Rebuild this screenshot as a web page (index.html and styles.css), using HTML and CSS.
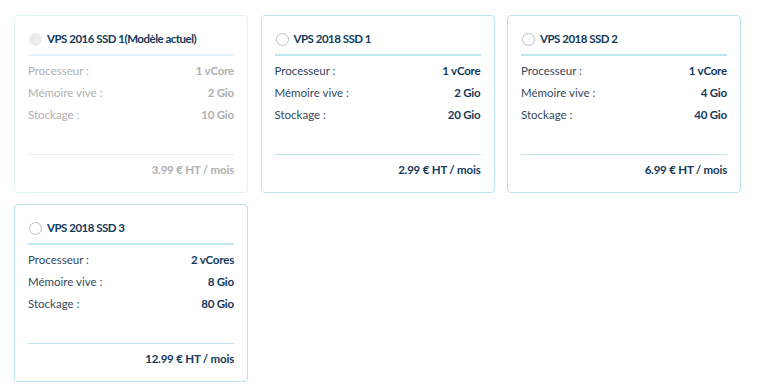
FILE: index.html
```html
<!DOCTYPE html>
<html lang="fr">
<head>
    <meta charset="UTF-8">
    <title>Changer de modèle VPS</title>
    <link rel="stylesheet" href="styles.css">
</head>
<body>

    <!-- Liste des offres VPS -->
    <div class="offers">

        <div class="offer disabled">
            <div class="offer-head">
                <span class="radio"></span>
                <span class="offer-name">VPS 2016 SSD 1(Modèle actuel)</span>
            </div>
            <div class="offer-specs">
                <div class="spec"><span>Processeur :</span><b>1 vCore</b></div>
                <div class="spec"><span>Mémoire vive :</span><b>2 Gio</b></div>
                <div class="spec"><span>Stockage :</span><b>10 Gio</b></div>
            </div>
            <div class="offer-price">3.99 € HT / mois</div>
        </div>

        <div class="offer">
            <div class="offer-head">
                <span class="radio"></span>
                <span class="offer-name">VPS 2018 SSD 1</span>
            </div>
            <div class="offer-specs">
                <div class="spec"><span>Processeur :</span><b>1 vCore</b></div>
                <div class="spec"><span>Mémoire vive :</span><b>2 Gio</b></div>
                <div class="spec"><span>Stockage :</span><b>20 Gio</b></div>
            </div>
            <div class="offer-price">2.99 € HT / mois</div>
        </div>

        <div class="offer">
            <div class="offer-head">
                <span class="radio"></span>
                <span class="offer-name">VPS 2018 SSD 2</span>
            </div>
            <div class="offer-specs">
                <div class="spec"><span>Processeur :</span><b>1 vCore</b></div>
                <div class="spec"><span>Mémoire vive :</span><b>4 Gio</b></div>
                <div class="spec"><span>Stockage :</span><b>40 Gio</b></div>
            </div>
            <div class="offer-price">6.99 € HT / mois</div>
        </div>

        <div class="offer">
            <div class="offer-head">
                <span class="radio"></span>
                <span class="offer-name">VPS 2018 SSD 3</span>
            </div>
            <div class="offer-specs">
                <div class="spec"><span>Processeur :</span><b>2 vCores</b></div>
                <div class="spec"><span>Mémoire vive :</span><b>8 Gio</b></div>
                <div class="spec"><span>Stockage :</span><b>80 Gio</b></div>
            </div>
            <div class="offer-price">12.99 € HT / mois</div>
        </div>

    </div>

</body>
</html>
```

FILE: styles.css
```css
body {
    font-family: Lato, "Open Sans", sans-serif;
    font-size: 11.5px;
    color: #34495b;
    background-color: #fff;
    margin: 0;
    padding: 15px 14px;
}
.offers {
    display: grid;
    grid-template-columns: repeat(3, 234px);
    column-gap: 12.5px;
    row-gap: 11px;
}
.offer {
    border: 1px solid #b7e4ee;
    border-radius: 4px;
    padding: 0 13px 11px;
}
.offer-head {
    display: flex;
    align-items: center;
    gap: 5px;
    padding: 13px 0 5px;
    line-height: 20px;
    border-bottom: 2px solid #bfe7f0;
}
.radio {
    width: 11px;
    height: 11px;
    border: 1px solid #b9c0c6;
    border-radius: 50%;
    margin-left: 1px;
}
.offer-name {
    font-size: 11.5px;
    font-weight: bold;
    letter-spacing: -0.5px;
    color: #143a5a;
}
.offer-specs {
    padding: 4px 0 28px;
    border-bottom: 1px solid #bfe7f0;
}
.spec {
    display: flex;
    justify-content: space-between;
    line-height: 22px;
}
.spec b, .offer-price {
    color: #143a5a;
    font-weight: bold;
    letter-spacing: -0.2px;
}
.offer-price {
    text-align: right;
    line-height: 22px;
    padding-top: 4px;
}
.disabled {
    border-color: #e4f3f7;
    color: #b0b0b0;
}
.disabled .offer-head, .disabled .offer-specs {
    border-bottom-color: #e4f3f7;
}
.disabled .radio {
    background-color: #ececec;
    border-color: #ececec;
}
.disabled .spec b, .disabled .offer-price {
    color: #b0b0b0;
}
```
